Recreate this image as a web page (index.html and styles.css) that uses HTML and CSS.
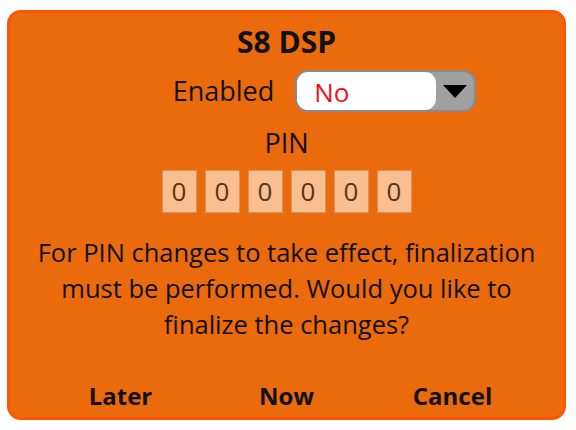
FILE: index.html
```html
<!DOCTYPE html>
<html>
<head>
<meta charset="utf-8">
<link rel="stylesheet" href="styles.css">
</head>
<body>
<div class="dialog">
  <div class="title">S8 DSP</div>
  <div class="row">
    <span class="label">Enabled</span>
    <div class="select">
      <div class="select-value">No</div>
      <div class="select-btn">
        <svg width="24" height="13" viewBox="0 0 24 13"><polygon points="0,0 24,0 12,13" fill="#000"/></svg>
      </div>
    </div>
  </div>
  <div class="pin-label">PIN</div>
  <div class="pin">
    <span class="digit">0</span>
    <span class="digit">0</span>
    <span class="digit">0</span>
    <span class="digit">0</span>
    <span class="digit">0</span>
    <span class="digit">0</span>
  </div>
  <div class="message">For PIN changes to take effect, finalization<br>must be performed. Would you like to<br>finalize the changes?</div>
  <div class="buttons">
    <span class="btn">Later</span>
    <span class="btn">Now</span>
    <span class="btn">Cancel</span>
  </div>
</div>
</body>
</html>
```
FILE: styles.css
```css
html, body {
  margin: 0;
  padding: 0;
  background: #ffffff;
}
body {
  font-family: "Open Sans", "Noto Sans", sans-serif;
  color: #111;
}
.dialog {
  box-sizing: border-box;
  width: 559px;
  height: 410px;
  margin: 10px 0 0 7px;
  border: 3px solid #ff5500;
  border-radius: 14px;
  background: #ea6a0c;
  display: flex;
  flex-direction: column;
  align-items: center;
}
.title {
  font-weight: 700;
  font-size: 30px;
  line-height: 38px;
  margin-top: 10px;
}
.row {
  display: flex;
  align-items: center;
  gap: 21px;
  margin-top: 9px;
  margin-left: 76px;
}
.label {
  font-size: 27px;
  line-height: 32px;
}
.select {
  display: flex;
  width: 181px;
  height: 42px;
  box-sizing: border-box;
  border: 2px solid #8a8a8a;
  border-radius: 13px;
  background: #a0a0a0;
}
.select-value {
  flex: 1;
  background: #fff;
  border-radius: 11px;
  color: #f0101a;
  font-size: 26px;
  line-height: 40px;
  padding-left: 17px;
}
.select-btn {
  width: 38px;
  display: flex;
  align-items: center;
  justify-content: center;
}
.pin-label {
  font-size: 27px;
  line-height: 32px;
  margin-top: 15px;
}
.pin {
  display: flex;
  gap: 8px;
  margin-top: 11px;
}
.digit {
  box-sizing: border-box;
  width: 35px;
  height: 43px;
  border: 1px solid #d49066;
  background: #f9bf90;
  color: #5a3418;
  font-size: 26px;
  line-height: 41px;
  text-align: center;
}
.message {
  font-size: 25.5px;
  line-height: 36px;
  text-align: center;
  margin-top: 21px;
}
.buttons {
  display: flex;
  justify-content: center;
  margin-top: auto;
  margin-bottom: 4px;
}
.btn {
  font-weight: 700;
  font-size: 24px;
  line-height: 34px;
  width: 166px;
  text-align: center;
}
```
